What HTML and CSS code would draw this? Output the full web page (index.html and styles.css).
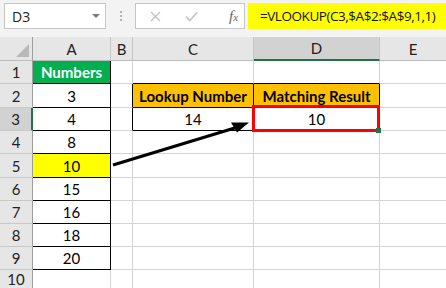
FILE: index.html
```html
<!DOCTYPE html>
<html lang="en">
<head>
  <meta charset="UTF-8" />
  <title>VLOOKUP approximate match</title>
  <link rel="stylesheet" href="styles.css">
</head>
<body>
  <div class="formula-bar">
    <div class="name-box">
      <span>D3</span>
      <span class="caret"></span>
    </div>
    <div class="grip"><i></i><i></i><i></i></div>
    <div class="fx-box">
      <svg class="btn-x" width="11" height="11" viewBox="0 0 11 11">
        <path d="M1 1 L10 10 M10 1 L1 10" stroke="#c3c3c3" stroke-width="1.4" fill="none"/>
      </svg>
      <svg class="btn-ok" width="13" height="11" viewBox="0 0 13 11">
        <path d="M1 5.5 L4.8 9.5 L12 1.5" stroke="#c3c3c3" stroke-width="1.6" fill="none"/>
      </svg>
      <span class="fx">f<sub>x</sub></span>
    </div>
    <div class="formula">=VLOOKUP(C3,$A$2:$A$9,1,1)</div>
  </div>

  <div class="sheet">
    <!-- column headers -->
    <div class="c hd corner"><span class="tri"></span></div>
    <div class="c hd">A</div>
    <div class="c hd">B</div>
    <div class="c hd">C</div>
    <div class="c hd active-col">D</div>
    <div class="c hd last">E</div>

    <!-- row 1 -->
    <div class="c rh">1</div>
    <div class="c num head-green">Numbers</div>
    <div class="c"></div>
    <div class="c bb"></div>
    <div class="c bb"></div>
    <div class="c last"></div>

    <!-- row 2 -->
    <div class="c rh">2</div>
    <div class="c num">3</div>
    <div class="c br"></div>
    <div class="c tbl head-orange">Lookup Number</div>
    <div class="c tbl head-orange">Matching Result</div>
    <div class="c last"></div>

    <!-- row 3 -->
    <div class="c rh active-row">3</div>
    <div class="c num">4</div>
    <div class="c br"></div>
    <div class="c tbl">14</div>
    <div class="c tbl">10</div>
    <div class="c last"></div>

    <!-- row 4 -->
    <div class="c rh">4</div>
    <div class="c num">8</div>
    <div class="c"></div>
    <div class="c"></div>
    <div class="c"></div>
    <div class="c last"></div>

    <!-- row 5 -->
    <div class="c rh">5</div>
    <div class="c num hit">10</div>
    <div class="c"></div>
    <div class="c"></div>
    <div class="c"></div>
    <div class="c last"></div>

    <!-- row 6 -->
    <div class="c rh">6</div>
    <div class="c num">15</div>
    <div class="c"></div>
    <div class="c"></div>
    <div class="c"></div>
    <div class="c last"></div>

    <!-- row 7 -->
    <div class="c rh">7</div>
    <div class="c num">16</div>
    <div class="c"></div>
    <div class="c"></div>
    <div class="c"></div>
    <div class="c last"></div>

    <!-- row 8 -->
    <div class="c rh">8</div>
    <div class="c num">18</div>
    <div class="c"></div>
    <div class="c"></div>
    <div class="c"></div>
    <div class="c last"></div>

    <!-- row 9 -->
    <div class="c rh">9</div>
    <div class="c num">20</div>
    <div class="c"></div>
    <div class="c"></div>
    <div class="c"></div>
    <div class="c last"></div>

    <!-- row 10 -->
    <div class="c rh">10</div>
    <div class="c"></div>
    <div class="c"></div>
    <div class="c"></div>
    <div class="c"></div>
    <div class="c last"></div>

    <!-- annotations over the grid -->
    <div class="selection"></div>
    <div class="fill-handle"></div>
    <svg class="arrow" width="446" height="251" viewBox="0 0 446 251">
      <line x1="113" y1="128" x2="238" y2="90" stroke="#000" stroke-width="3" />
      <polygon points="231,85.5 249,85.5 237,95.5" fill="#000" />
    </svg>
  </div>
</body>
</html>
```

FILE: styles.css
```css
body {
  margin: 0;
  width: 446px;
  height: 288px;
  overflow: hidden;
  background-color: #fff;
  font-family: "Lato", "Liberation Sans", sans-serif;
}

/* formula bar */
.formula-bar {
  height: 37px;
  box-sizing: border-box;
  padding-top: 3px;
  display: flex;
  align-items: flex-start;
  background-color: #f3f3f3;
}
.name-box {
  flex-shrink: 0;
  margin-left: 4px;
  width: 102px;
  height: 26px;
  box-sizing: border-box;
  border: 1px solid #c6c6c6;
  background-color: #fff;
  display: flex;
  align-items: center;
  justify-content: space-between;
  padding: 0 5px 0 7px;
  font-family: "Open Sans", sans-serif;
  font-size: 14px;
  color: #222;
}
.caret {
  width: 0;
  height: 0;
  border-left: 4px solid transparent;
  border-right: 4px solid transparent;
  border-top: 4px solid #7a7a7a;
}
.grip {
  flex-shrink: 0;
  margin: 8px 13px 0 14px;
  display: flex;
  flex-direction: column;
  gap: 2px;
}
.grip i {
  display: block;
  width: 2px;
  height: 2px;
  background-color: #b5b5b5;
}
.fx-box {
  flex-shrink: 0;
  width: 110px;
  height: 26px;
  box-sizing: border-box;
  border: 1px solid #c6c6c6;
  background-color: #fff;
  display: flex;
  align-items: center;
}
.btn-x {
  margin-left: 14px;
}
.btn-ok {
  margin-left: 24px;
}
.fx {
  margin-left: 31px;
  font-family: "Liberation Serif", serif;
  font-style: italic;
  font-size: 15px;
  color: #666;
}
.fx sub {
  font-size: 11px;
  vertical-align: 0;
}
.formula {
  margin-left: 3px;
  flex: 1;
  min-width: 0;
  overflow: hidden;
  height: 26px;
  padding-left: 12px;
  background-color: #ffff00;
  font-family: "Open Sans", sans-serif;
  font-size: 13.5px;
  letter-spacing: -0.45px;
  line-height: 26px;
  color: #111;
  white-space: nowrap;
}

/* sheet grid */
.sheet {
  position: relative;
  height: 251px;
  display: grid;
  grid-template-columns: 33px 78px 22px 121px 126px 1fr;
  grid-template-rows: 24px 23px 24px 23px 23px 24px 23px 23px 23px 23px 1fr;
}
.c {
  box-sizing: border-box;
  border-right: 1px solid #d4d4d4;
  border-bottom: 1px solid #d4d4d4;
  display: flex;
  align-items: center;
  justify-content: center;
  font-size: 15px;
  color: #000;
}
.c.last {
  border-right: none;
}
.hd {
  background-color: #e6e6e6;
  border-right-color: #c6c6c6;
  border-bottom-color: #bdbdbd;
  color: #222;
}
.corner {
  position: relative;
  border-right-color: #9e9e9e;
}
.tri {
  position: absolute;
  right: 3px;
  bottom: 3px;
  width: 0;
  height: 0;
  border-left: 13px solid transparent;
  border-bottom: 13px solid #b9b9b9;
}
.active-col {
  background-color: #d2d2d2;
  border-bottom: 2px solid #217346;
}
.rh {
  background-color: #e6e6e6;
  border-right-color: #9e9e9e;
  border-bottom-color: #c9c9c9;
  color: #222;
}
.active-row {
  background-color: #d2d2d2;
  border-right: 2px solid #217346;
}

/* data tables */
.num {
  border-right-color: #000;
  border-bottom-color: #000;
}
.head-green {
  background-color: #00b050;
  color: #fff;
  font-weight: bold;
}
.hit {
  background-color: #ffff00;
}
.br {
  border-right-color: #000;
}
.bb {
  border-bottom-color: #000;
}
.tbl {
  border-right-color: #000;
  border-bottom-color: #000;
}
.head-orange {
  background-color: #ffc000;
  font-weight: bold;
}

/* overlays */
.selection {
  position: absolute;
  left: 252px;
  top: 68px;
  width: 128px;
  height: 27px;
  box-sizing: border-box;
  border: 3px solid #ff0000;
}
.fill-handle {
  position: absolute;
  left: 376px;
  top: 91px;
  width: 5px;
  height: 5px;
  background-color: #217346;
}
.arrow {
  position: absolute;
  left: 0;
  top: 0;
  pointer-events: none;
}
```
